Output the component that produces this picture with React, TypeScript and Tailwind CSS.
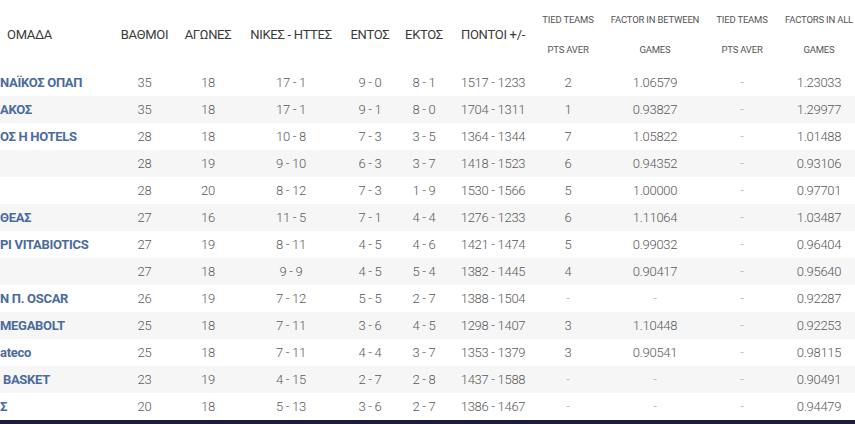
type Row = {
  team: string;
  pts: string;
  games: string;
  wl: string;
  home: string;
  away: string;
  points: string;
  tied: string;
  between: string;
  tied2: string;
  all: string;
};

const rows: Row[] = [
  { team: 'ΝΑΪΚΟΣ ΟΠΑΠ', pts: '35', games: '18', wl: '17 - 1', home: '9 - 0', away: '8 - 1', points: '1517 - 1233', tied: '2', between: '1.06579', tied2: '-', all: '1.23033' },
  { team: 'ΑΚΟΣ', pts: '35', games: '18', wl: '17 - 1', home: '9 - 1', away: '8 - 0', points: '1704 - 1311', tied: '1', between: '0.93827', tied2: '-', all: '1.29977' },
  { team: 'ΟΣ Η HOTELS', pts: '28', games: '18', wl: '10 - 8', home: '7 - 3', away: '3 - 5', points: '1364 - 1344', tied: '7', between: '1.05822', tied2: '-', all: '1.01488' },
  { team: '', pts: '28', games: '19', wl: '9 - 10', home: '6 - 3', away: '3 - 7', points: '1418 - 1523', tied: '6', between: '0.94352', tied2: '-', all: '0.93106' },
  { team: '', pts: '28', games: '20', wl: '8 - 12', home: '7 - 3', away: '1 - 9', points: '1530 - 1566', tied: '5', between: '1.00000', tied2: '-', all: '0.97701' },
  { team: 'ΘΕΑΣ', pts: '27', games: '16', wl: '11 - 5', home: '7 - 1', away: '4 - 4', points: '1276 - 1233', tied: '6', between: '1.11064', tied2: '-', all: '1.03487' },
  { team: 'ΡΙ VITABIOTICS', pts: '27', games: '19', wl: '8 - 11', home: '4 - 5', away: '4 - 6', points: '1421 - 1474', tied: '5', between: '0.99032', tied2: '-', all: '0.96404' },
  { team: '', pts: '27', games: '18', wl: '9 - 9', home: '4 - 5', away: '5 - 4', points: '1382 - 1445', tied: '4', between: '0.90417', tied2: '-', all: '0.95640' },
  { team: 'Ν Π. OSCAR', pts: '26', games: '19', wl: '7 - 12', home: '5 - 5', away: '2 - 7', points: '1388 - 1504', tied: '-', between: '-', tied2: '-', all: '0.92287' },
  { team: 'MEGABOLT', pts: '25', games: '18', wl: '7 - 11', home: '3 - 6', away: '4 - 5', points: '1298 - 1407', tied: '3', between: '1.10448', tied2: '-', all: '0.92253' },
  { team: 'ateco', pts: '25', games: '18', wl: '7 - 11', home: '4 - 4', away: '3 - 7', points: '1353 - 1379', tied: '3', between: '0.90541', tied2: '-', all: '0.98115' },
  { team: ' BASKET', pts: '23', games: '19', wl: '4 - 15', home: '2 - 7', away: '2 - 8', points: '1437 - 1588', tied: '-', between: '-', tied2: '-', all: '0.90491' },
  { team: 'Σ', pts: '20', games: '18', wl: '5 - 13', home: '3 - 6', away: '2 - 7', points: '1386 - 1467', tied: '-', between: '-', tied2: '-', all: '0.94479' },
];

const cols = 'grid grid-cols-[113px_63px_64px_102px_56px_52px_86px_64px_110px_64px_90px]';

function Head({ children, left }: { children: string; left?: boolean }) {
  return (
    <div
      className={`flex items-center whitespace-nowrap text-[13px] tracking-[-0.3px] text-[#3a3a3a] ${left ? 'pl-[7px]' : 'justify-center'}`}
    >
      {children}
    </div>
  );
}

function SmallHead({ top, bottom }: { top: string; bottom: string }) {
  return (
    <div className="flex flex-col items-center justify-center text-[9.5px] tracking-[-0.2px] leading-[30px] text-[#555] whitespace-nowrap">
      <span>{top}</span>
      <span>{bottom}</span>
    </div>
  );
}

function Cell({ children }: { children: string }) {
  const dash = children === '-';
  return (
    <div className={`flex items-center justify-center whitespace-nowrap ${dash ? 'text-[#aaa]' : 'text-[#5a5a5a]'}`}>
      {children}
    </div>
  );
}

export default function App() {
  return (
    <div className="w-[855px] h-[424px] overflow-hidden bg-white flex flex-col font-['Roboto',sans-serif]">
      <div className={`${cols} h-[69px] shrink-0`}>
        <Head left>ΟΜΑΔΑ</Head>
        <Head>ΒΑΘΜΟΙ</Head>
        <Head>ΑΓΩΝΕΣ</Head>
        <Head>ΝΙΚΕΣ - ΗΤΤΕΣ</Head>
        <Head>ΕΝΤΟΣ</Head>
        <Head>ΕΚΤΟΣ</Head>
        <Head>ΠΟΝΤΟΙ +/-</Head>
        <SmallHead top="TIED TEAMS" bottom="PTS AVER" />
        <SmallHead top="FACTOR IN BETWEEN" bottom="GAMES" />
        <SmallHead top="TIED TEAMS" bottom="PTS AVER" />
        <SmallHead top="FACTORS IN ALL" bottom="GAMES" />
      </div>

      <div className="flex flex-col">
        {rows.map((r, i) => (
          <div
            key={i}
            className={`${cols} h-[27px] text-[13px] font-light tracking-[-0.3px] ${i % 2 === 1 ? 'bg-[#f6f6f6]' : 'bg-white'}`}
          >
            <div className="flex items-center overflow-hidden whitespace-pre text-[13px] font-bold text-[#4a6b9d] tracking-[-0.3px]">
              {r.team}
            </div>
            <Cell>{r.pts}</Cell>
            <Cell>{r.games}</Cell>
            <Cell>{r.wl}</Cell>
            <Cell>{r.home}</Cell>
            <Cell>{r.away}</Cell>
            <Cell>{r.points}</Cell>
            <Cell>{r.tied}</Cell>
            <Cell>{r.between}</Cell>
            <Cell>{r.tied2}</Cell>
            <Cell>{r.all}</Cell>
          </div>
        ))}
      </div>

      <div className="h-[4px] bg-[#1c1d3a] mt-auto" />
    </div>
  );
}
